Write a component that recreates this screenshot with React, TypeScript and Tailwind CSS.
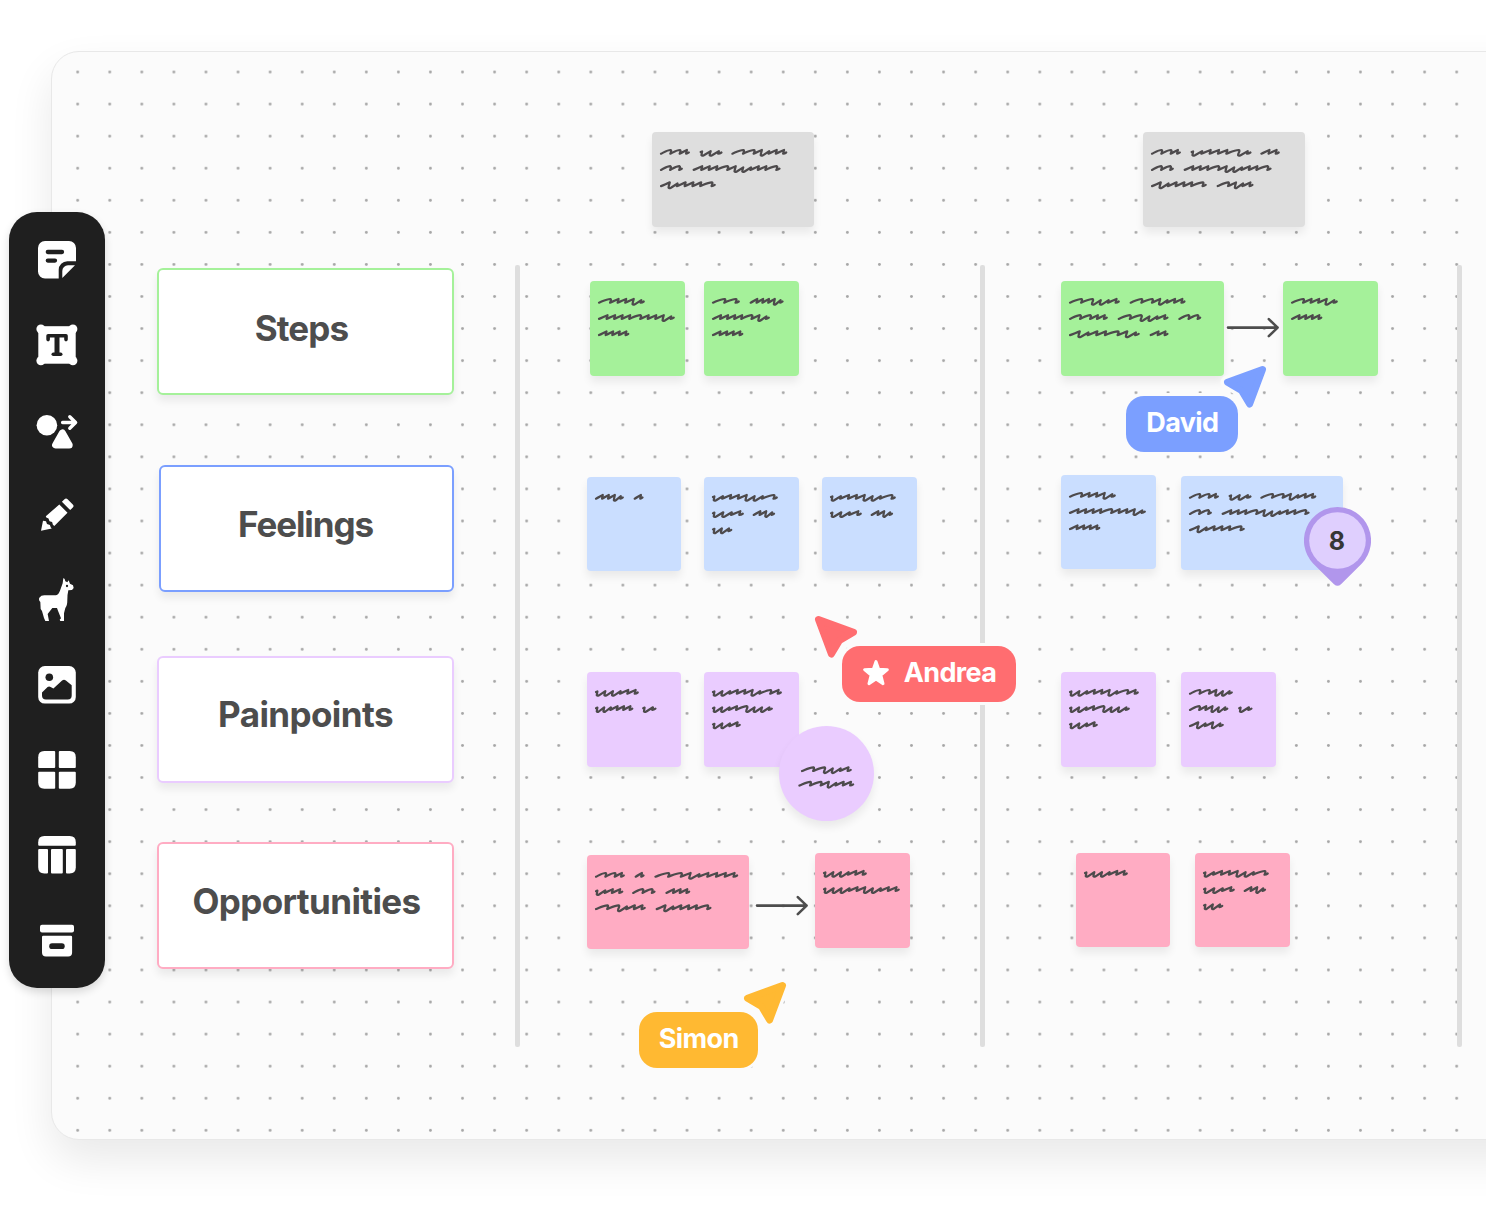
import type { ReactNode } from "react";
import clsx from "clsx";

// Each word is "<strokes>:<width>", strokes being a (arch), w (wide arch), u (dip)
type Line = string;

const strokeWidths: Record<string, number> = { a: 6.2, w: 9, u: 6.4 };

const strokePath = (stroke: string, k: number) => {
  if (stroke === "w") {
    return `c${3.2 * k} -1.6 ${6.6 * k} -3.9 ${9.4 * k} -3.7 q${1 * k} .3 ${-0.4 * k} 3.7`;
  }
  if (stroke === "u") {
    return `l${-0.2 * k} 1.5 q${0.5 * k} 1 ${1.9 * k} .1 l${5.3 * k} -4.2 l${-0.6 * k} 2.6`;
  }
  return `c${2.6 * k} -1.2 ${4.6 * k} -2.6 ${7 * k} -3.7 l${-0.8 * k} 3.7`;
};

const wordPath = (strokes: string, width: number, x: number, y: number) => {
  const letters = strokes.split("");
  const natural = letters.reduce((sum, s) => sum + strokeWidths[s], 2.8);
  const k = (width - 2) / natural;
  const lead = letters[0] === "u" ? "m0 -1.7 l1.4 -.6 l-.4 2.3" : "";
  return `M${x + 1} ${y + 1.5} ${lead} ${letters.map((s) => strokePath(s, k)).join(" ")} q${1.4 * k} -.2 ${2.6 * k} -1.2`;
};

const linePath = (line: Line, x: number, y: number) => {
  let cursor = x;
  return line
    .split(" ")
    .map((word) => {
      const [strokes, width] = word.split(":");
      const d = wordPath(strokes, Number(width), cursor, y);
      cursor += Number(width) + 9.7;
      return d;
    })
    .join(" ");
};

const GRAY_TEXT = ["wwa:30 uu:22 wwauaa:56", "ww:23 aaawauuaaw:88", "auaaaw:56"];
const STEP_TEXT = ["waaau:47", "aaaawaaau:77", "aaaa:31.5"];
const FEEL_TEXT = ["uaaauuw:65", "uua:31 aau:22.5", "uu:19.5"];
const PAIN_TEXT = ["uuaaauwa:69", "uuawuuu:60", "uua:28"];

const noteColors = {
  gray: "bg-[#dedede]",
  green: "bg-[#a5f19a]",
  blue: "bg-[#cadeff]",
  purple: "bg-[#eaccff]",
  pink: "bg-[#ffacc3]",
};

interface NoteProps {
  color: keyof typeof noteColors;
  lines: Line[];
  wide?: boolean;
  className?: string;
}

const Note = ({ color, lines, wide, className }: NoteProps) => (
  <div
    className={clsx(
      "h-[94.5px] shrink-0 rounded-[4px] shadow-[0_6px_9px_rgba(0,0,0,0.07)]",
      wide ? "w-[162.5px]" : "w-[94.6px]",
      noteColors[color],
      className,
    )}
  >
    <svg className="block h-full w-full" fill="none" stroke="#4d4a4c" strokeWidth="2.2" strokeLinejoin="round" strokeLinecap="round">
      {lines.map((line, i) => (
        <path key={i} d={linePath(line, 8, 20.2 + i * 16.2)} />
      ))}
    </svg>
  </div>
);

const Arrow = ({ className }: { className?: string }) => (
  <svg className={clsx("h-[94.5px] w-[54px] shrink-0", className)} viewBox="0 0 54 94.5" fill="none" stroke="#4d4d4d" strokeWidth="2.6" strokeLinecap="round" strokeLinejoin="round">
    <path d="M2 46.6H51.6M42.8 38.1 51.6 46.6 42.8 55.1" />
  </svg>
);

const Divider = () => <div className="mt-[213px] h-[781.5px] w-[5.3px] shrink-0 rounded-[2px] bg-[#dedede]" />;

const labels = [
  { text: "Steps", box: "w-[297px] border-[#a5f19a]", title: "pb-1.5 pr-2 tracking-[-0.9px]" },
  { text: "Feelings", box: "mt-[70.3px] w-[295px] border-[#7b9fff]", title: "pb-2 pr-0.5 tracking-[-1.1px]" },
  { text: "Painpoints", box: "mt-[63.5px] w-[297px] border-[#eaccff]", title: "pb-[9px] tracking-[-0.6px]" },
  { text: "Opportunities", box: "mt-[59.2px] w-[297px] border-[#ffacc3]", title: "pb-2 pl-0.5 tracking-[-0.62px]" },
];

const tools: { name: string; icon: ReactNode }[] = [
  {
    name: "Sticky note",
    icon: (
      <>
        <path d="M10 3h24a7 7 0 0 1 7 7v13.2H32.3a8.600 8.600 0 0 0-8.600 8.600v8.700H10a7 7 0 0 1-7-7V10a7 7 0 0 1 7-7Z" />
        <path d="M33 27.300h7L27.300 40v-7a5.700 5.700 0 0 1 5.700-5.700Z" />
        <path d="M12.800 14H27M12.800 22.600H20" stroke="#1f1f1f" strokeWidth="4.300" strokeLinecap="round" />
      </>
    ),
  },
  {
    name: "Text",
    icon: (
      <>
        <rect x="3.3" y="3.2" width="37.4" height="37.5" />
        <circle cx="5.9" cy="6" r="4.5" />
        <circle cx="37.9" cy="6" r="4.5" />
        <circle cx="5.9" cy="37.8" r="4.5" />
        <circle cx="37.9" cy="37.8" r="4.5" />
        <g fill="none" stroke="#1f1f1f" strokeLinecap="round" strokeLinejoin="round">
          <path d="M13.1 16.6V12.8H31v3.8" strokeWidth="3.6" />
          <path d="M22 13v18" strokeWidth="5" strokeLinecap="butt" />
          <path d="M18.3 31.3h7.4" strokeWidth="3.6" />
        </g>
      </>
    ),
  },
  {
    name: "Shapes",
    icon: (
      <>
        <circle cx="11.9" cy="17.3" r="10.3" />
        <path d="M27.6 14.5h12.6M34.8 8.8l5.8 5.7-5.8 5.8" fill="none" stroke="#fff" strokeWidth="3.4" strokeLinecap="round" strokeLinejoin="round" />
        <path d="M27.4 25 20.6 37h13.6Z" stroke="#fff" strokeWidth="7" strokeLinejoin="round" />
      </>
    ),
  },
  {
    name: "Pencil",
    icon: (
      <>
        <path d="M29.5 6.2q1.5-1.6 3.1 0l5.2 5.2q1.5 1.5 0 3.1l-2.6 2.6-8.3-8.3Z" />
        <path d="m24.3 11.5 8.2 8.2-13.2 13.2-1.4-1.2-.8-2.6-2.6-.9-1-2.8-2.2-1-.5-1.1Z" />
        <path d="m6 37.8 2-10 3 .4 1 2.8 2.9 1.1.9 2.3 1 1Z" />
      </>
    ),
  },
  {
    name: "Llama",
    icon: (
      <g transform="scale(.3333) translate(-105 -54)">
        <path d="M190 55Q194 53 196 64L202 67 206 61 210 71 219 76 221 84 216 90 205 91Q202 103 202 120 202 137 196 144L192 160V183H181L179 179 183 175 174 152 171 144H157L143 162 147 183H136L132 174 126 153 122 147 121 126Q115 121 118 113 123 106 133 106H168Q176 104 181 89L188 70Z" />
        <circle cx="201" cy="78" r="3.4" fill="#1f1f1f" />
      </g>
    ),
  },
  {
    name: "Image",
    icon: (
      <>
        <rect x="3.2" y="3" width="37.6" height="37.6" rx="6.6" />
        <circle cx="14.3" cy="14.3" r="3.8" fill="#1f1f1f" />
        <path d="M7 31.4v-1.8l5.6-5.5q1.5-1.2 3 0l2.8 1.5 8.7-8.1q1.9-1.7 3.8 0l5.8 4.8v10.3a4 4 0 0 1-4 4H11a4 4 0 0 1-4-4Z" fill="#1f1f1f" />
      </>
    ),
  },
  {
    name: "Grid",
    icon: (
      <>
        <path d="M9.3 3h9.9q1 0 1 1v15q0 1-1 1H4.2q-1 0-1-1V9.2Q3.2 3 9.3 3Z" />
        <path d="M34.7 3h-9.9q-1 0-1 1v15q0 1 1 1h15q1 0 1-1V9.2Q40.8 3 34.7 3Z" />
        <path d="M9.3 40.7h9.9q1 0 1-1v-15q0-1-1-1H4.2q-1 0-1 1v9.8q0 6.2 6.1 6.2Z" />
        <path d="M34.7 40.7h-9.9q-1 0-1-1v-15q0-1 1-1h15q1 0 1 1v9.8q0 6.2-6.1 6.2Z" />
      </>
    ),
  },
  {
    name: "Table",
    icon: (
      <>
        <path d="M9.3 3h25.4q6.1 0 6.1 6.2v2.5q0 1-1 1H4.2q-1 0-1-1V9.2Q3.2 3 9.3 3Z" />
        <path d="M4.2 16H12q1 0 1 1v22.4q0 1-1 1H9.3q-6.1 0-6.1-6.2V17q0-1 1-1Z" />
        <rect x="16" y="16" width="11.8" height="24.4" rx="1" />
        <path d="M39.8 16H32q-1 0-1 1v22.4q0 1 1 1h2.7q6.1 0 6.1-6.2V17q0-1-1-1Z" />
      </>
    ),
  },
  {
    name: "Archive",
    icon: (
      <>
        <rect x="5" y="6.7" width="34" height="7.7" rx="2" />
        <path d="M8.2 17.7h27.7q1.2 0 1.2 1.2v15.7q0 4-4 4H11q-4 0-4-4V18.9q0-1.2 1.2-1.2Z" />
        <rect x="14.2" y="25.3" width="15.5" height="5.7" rx="2.85" fill="#1f1f1f" />
      </>
    ),
  },
];

// Floats over the left edge of the board
const Toolbar = () => (
  <nav className="absolute left-[9px] top-[212px] flex h-[776px] w-24 flex-col items-center rounded-[28px] bg-[#1f1f1f] pt-[5.5px] shadow-[0_4px_8px_rgba(0,0,0,0.14)]">
    {tools.map((tool) => (
      <button key={tool.name} aria-label={tool.name} className="flex h-[85px] w-full shrink-0 items-center justify-center">
        <svg className="size-11" viewBox="0 0 44 44" fill="#fff">
          {tool.icon}
        </svg>
      </button>
    ))}
  </nav>
);

const DotGrid = () => (
  <svg className="absolute inset-0 h-full w-full">
    <defs>
      <pattern id="dots" x="9.7" y="4" width="32.07" height="32.07" patternUnits="userSpaceOnUse">
        <circle cx="16" cy="16" r="1.45" fill="#a6a6a6" />
      </pattern>
    </defs>
    <rect x="12" y="8" width="100%" height="100%" fill="url(#dots)" />
  </svg>
);

const LabelColumn = () => (
  <div className="mr-[61px] flex w-[297px] shrink-0 flex-col items-end pt-[216px]">
    {labels.map((label) => (
      <div
        key={label.text}
        className={clsx("flex h-[127px] items-center justify-center rounded-md border-2 bg-white shadow-[0_6px_9px_rgba(0,0,0,0.07)]", label.box)}
      >
        <h2 className={clsx("text-[35px] font-[650] leading-none text-[#4d4d4d]", label.title)}>{label.text}</h2>
      </div>
    ))}
  </div>
);

const FirstStage = () => (
  <div className="flex w-[459.7px] shrink-0 flex-col pt-20">
    <div className="flex pl-[131.5px]">
      <Note color="gray" wide lines={GRAY_TEXT} />
    </div>
    <div className="mt-[54.7px] flex gap-[19.4px] pl-[70px]">
      <Note color="green" lines={STEP_TEXT} />
      <Note color="green" lines={["ww:28 aaaau:34", "aaaawau:58", "aaaa:31.5"]} />
    </div>
    <div className="mt-[100.9px] flex gap-[23.2px] pl-[66.4px]">
      <Note color="blue" lines={["aaau:29 a:10"]} />
      <Note color="blue" lines={FEEL_TEXT} />
      <Note color="blue" lines={FEEL_TEXT.slice(0, 2)} />
    </div>
    <div className="mt-[101.3px] flex gap-[23.1px] pl-[66.4px]">
      <Note color="purple" lines={["uuuaa:43", "uuaaa:37.5 u:13.5"]} />
      <div className="relative">
        <Note color="purple" lines={PAIN_TEXT} />
        <div className="absolute left-[75px] top-[53.3px] size-[95px] rounded-full bg-[#eaccff] shadow-[0_6px_9px_rgba(0,0,0,0.07)]">
          <svg className="size-full" fill="none" stroke="#4d4a4c" strokeWidth="2.2" strokeLinejoin="round" strokeLinecap="round">
            <path d={linePath("wwuua:51", 22, 43.5)} />
            <path d={linePath("wwauaa:56", 19.4, 58)} />
          </svg>
        </div>
      </div>
    </div>
    <div className="mt-[86.4px] flex gap-1.5 pl-[66.4px]">
      <Note color="pink" wide lines={["wwa:30 a:10 wwauaaaa:84", "uaa:27.5 ww:23.5 aaa:25", "wwuaa:51 auaaaw:56"]} className="mt-[1.4px]" />
      <Arrow className="mt-1.5" />
      <Note color="pink" lines={["uuuaa:43", "uuuaauuaa:76"]} />
    </div>
  </div>
);

const SecondStage = () => (
  <div className="flex w-[471.9px] shrink-0 flex-col pt-20">
    <div className="flex pl-[157.6px]">
      <Note color="gray" wide lines={["wwa:30 uaaawu:60 aa:19.5", GRAY_TEXT[1], "auaaaw:56 waua:37"]} />
    </div>
    <div className="mt-[54.7px] flex gap-[2.7px] pl-[76px]">
      <Note color="green" wide lines={["wwuua:51 wwauaa:56", "wwaa:39 wwuua:51 ww:23", "auaawau:71 aa:19"]} />
      <Arrow />
      <Note color="green" lines={[STEP_TEXT[0], STEP_TEXT[2]]} />
    </div>
    <div className="mt-[99px] flex gap-[24.8px] pl-[76px]">
      <Note color="blue" lines={STEP_TEXT} />
      <Note color="blue" wide lines={GRAY_TEXT} className="mt-px" />
    </div>
    <div className="mt-[101.9px] flex gap-[25.1px] pl-[76px]">
      <Note color="purple" lines={PAIN_TEXT} />
      <Note color="purple" lines={["wwauu:44", "waauu:39.5 u:13.5", "auau:35"]} />
    </div>
    <div className="mt-[86.4px] flex gap-[24.9px] pl-[90.5px]">
      <Note color="pink" lines={["uuuaa:43"]} />
      <Note color="pink" lines={FEEL_TEXT} />
    </div>
  </div>
);

const Pointer = ({ color, className }: { color: string; className: string }) => (
  <svg className={clsx("absolute size-11 overflow-visible", className)} viewBox="0 0 44 44" strokeLinejoin="round">
    <path d="M39.5 4.5 4.5 17.3 18.5 25.5 26.6 39Z" fill="#fbfbfb" stroke="#fbfbfb" strokeWidth="14" />
    <path d="M39.5 4.5 4.5 17.3 18.5 25.5 26.6 39Z" fill={color} stroke={color} strokeWidth="7" />
  </svg>
);

const NameTag = ({ className, children }: { className: string; children: ReactNode }) => (
  <div
    className={clsx(
      "absolute flex h-14 items-center justify-center rounded-[18px] pb-[3px] text-[27px] font-bold leading-none tracking-[-0.6px] text-white ring-[3px] ring-[#fbfbfb]",
      className,
    )}
  >
    {children}
  </div>
);

const VoteCounter = () => (
  <div className="absolute left-[1303.5px] top-[507px] flex h-[79px] w-[67px] flex-col">
    <svg className="absolute inset-0" width="67" height="79" viewBox="0 0 67 79">
      <path d="M33.5 0A33.5 33.5 0 0 0 9.1 56.500L30 77.200Q33.500 80.200 37 77.200L57.900 56.500A33.500 33.500 0 0 0 33.500 0Z" fill="#b196ec" />
      <circle cx="33.5" cy="33.5" r="28.3" fill="#dfcffe" />
    </svg>
    <span className="relative flex h-[69px] items-center justify-center text-[25px] font-bold text-[#363636]">8</span>
  </div>
);

const App = () => {
  return (
    <main className="relative h-[1212px] w-full overflow-hidden bg-white pl-[51px] pt-[51px] font-['Inter',sans-serif]">
      <section className="relative flex h-[1088.5px] w-[1500px] rounded-[28px] border border-[#e8e8e8] bg-[#fbfbfb] shadow-[0_20px_44px_rgba(0,0,0,0.09)]">
        <DotGrid />
        <div className="relative flex pl-[105px]">
          <LabelColumn />
          <Divider />
          <FirstStage />
          <Divider />
          <SecondStage />
          <Divider />
        </div>
      </section>

      <VoteCounter />

      {/* Live cursors */}
      <Pointer color="#7b9fff" className="left-[1222.5px] top-[365px]" />
      <NameTag className="left-[1126.4px] top-[395.5px] w-28 bg-[#7b9fff]">David</NameTag>

      <Pointer color="#ff6d70" className="left-[814px] top-[615px] -scale-x-100" />
      <NameTag className="left-[842px] top-[645.5px] w-[174px] gap-3.5 bg-[#ff6d70]">
        <svg className="mt-0.5 size-7" viewBox="0 0 27 27" fill="#fff" stroke="#fff" strokeWidth="2.8" strokeLinejoin="round">
          <path d="m13.5 2.5 2.6 7.3 8.4.5-6.3 5.3 2.1 8.2-6.8-4.5-6.8 4.5 2.1-8.2L2.5 10.3l8.4-.5Z" />
        </svg>
        Andrea
      </NameTag>

      <Pointer color="#ffb932" className="left-[742.8px] top-[981px]" />
      <NameTag className="left-[639.3px] top-[1011.5px] w-[119px] bg-[#ffb932]">Simon</NameTag>

      <Toolbar />
    </main>
  );
};

export default App;
